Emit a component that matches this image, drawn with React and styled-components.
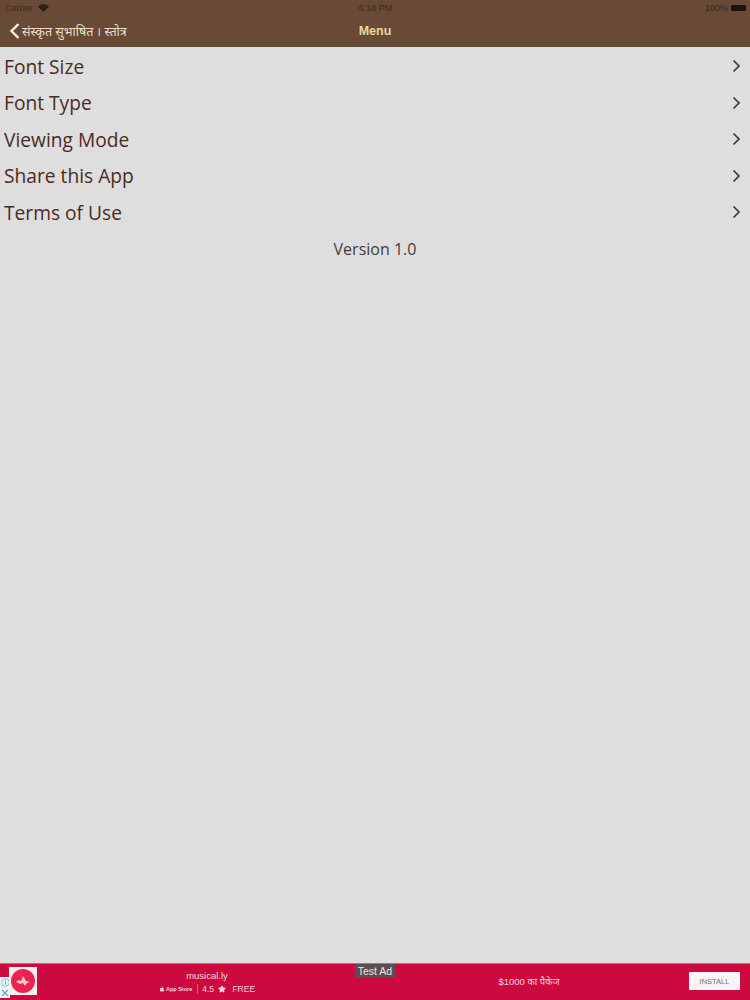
import React from 'react';
import styled, { createGlobalStyle } from 'styled-components';
import { FaApple, FaStar } from 'react-icons/fa';

const primaryFont = '"Open Sans", "Noto Sans", sans-serif';
const helvetica = '"Liberation Sans", Arial, sans-serif';
const brown = '#684a37';
const crimson = '#cd0a3f';

const GlobalStyle = createGlobalStyle`
  html, body, #root {
    margin: 0;
    padding: 0;
    height: 100%;
  }
  body {
    background: #dedede;
    font-family: ${primaryFont};
  }
`;

const Pagina = styled.div`
  width: 750px;
  height: 1000px;
  display: flex;
  flex-direction: column;
  overflow: hidden;
`;

const Cabecera = styled.header`
  height: 47px;
  flex: none;
  box-sizing: border-box;
  background: ${brown};
  border-bottom: 1px solid #5b4a40;
  display: flex;
  flex-direction: column;
`;

const StatusBar = styled.div`
  height: 15px;
  flex: none;
  display: grid;
  grid-template-columns: 1fr auto 1fr;
  align-items: center;
  padding: 0 4px 0 5px;
  font-family: ${helvetica};
  font-size: 9px;
  color: #38281e;
`;

const StatusLeft = styled.div`
  display: flex;
  align-items: center;
  gap: 5px;
`;

const StatusRight = styled.div`
  display: flex;
  align-items: center;
  justify-content: flex-end;
  gap: 3px;
`;

const Battery = styled.span`
  display: block;
  width: 15px;
  height: 6px;
  border-radius: 1px;
  background: #1d1410;
`;

const NavBar = styled.nav`
  flex: 1;
  display: grid;
  grid-template-columns: 1fr auto 1fr;
  align-items: center;
  padding: 1px 9px 0;
`;

const BackLink = styled.div`
  display: flex;
  align-items: center;
  gap: 2px;
  font-family: "Noto Sans", "Lohit Devanagari", sans-serif;
  font-size: 12.5px;
  color: #eadfc9;
  white-space: nowrap;
`;

const NavTitle = styled.h1`
  margin: 0;
  font-family: ${helvetica};
  font-size: 12.5px;
  font-weight: 700;
  color: #e8d89a;
`;

const Contenido = styled.main`
  flex: 1;
  padding-top: 1px;
  background: #dedede;
`;

const Lista = styled.ul`
  list-style: none;
  margin: 0;
  padding: 0;
`;

const Fila = styled.li`
  height: 36.5px;
  display: flex;
  align-items: center;
  justify-content: space-between;
  padding: 0 9px 0 4px;
  font-size: 19.2px;
  color: #4b2a22;
`;

const Version = styled.div`
  height: 36.5px;
  display: flex;
  align-items: center;
  justify-content: center;
  font-size: 16px;
  color: #4a3a34;
`;

const Anuncio = styled.footer`
  position: relative;
  height: 37px;
  flex: none;
  background: ${crimson};
  border-top: 1px solid #e8587c;
  box-sizing: border-box;
  display: grid;
  grid-template-columns: 9px 28px 120px 100px 150px 244px 1fr auto;
  align-items: center;
  padding: 0 10px 2px 0;
  color: #f6d5dd;
  font-family: ${helvetica};
`;

const AdBadges = styled.div`
  display: flex;
  flex-direction: column;
  align-self: end;
  align-items: center;
  justify-content: space-around;
  width: 10px;
  height: 21px;
  background: #eef6f8;
`;

const AppIcon = styled.div`
  width: 28px;
  height: 28px;
  background: #f7eef0;
  display: flex;
  align-items: center;
  justify-content: center;
`;

const AppDisc = styled.div`
  width: 24px;
  height: 24px;
  border-radius: 50%;
  background: #ea2350;
  display: flex;
  align-items: center;
  justify-content: center;
`;

const AppInfo = styled.div`
  grid-column: 4;
  display: flex;
  flex-direction: column;
  align-items: center;
  gap: 3px;
  margin-top: 1px;
  font-size: 9px;
`;

const AppName = styled.div`
  font-size: 9.5px;
  line-height: 11px;
`;

const AppMeta = styled.div`
  display: flex;
  align-items: center;
  gap: 4px;
  font-size: 8.5px;
  line-height: 10px;
  white-space: nowrap;
`;

const StoreLabel = styled.span`
  display: flex;
  align-items: center;
  gap: 1px;
  font-size: 5.5px;
  font-weight: 700;
  padding-right: 5px;
  border-right: 1px solid #dd5b7d;
`;

const Oferta = styled.div`
  grid-column: 6;
  text-align: center;
  font-family: ${helvetica}, "Noto Sans";
  font-size: 9.5px;
`;

const Instalar = styled.button`
  grid-column: 8;
  width: 51px;
  height: 18px;
  padding: 0;
  border: 0;
  border-radius: 1px;
  background: #f9f4f5;
  color: #856b72;
  font-family: ${helvetica};
  font-size: 7.5px;
`;

const TestAd = styled.div`
  position: absolute;
  left: 355px;
  top: 0;
  width: 40px;
  height: 14px;
  background: #5a4f50;
  color: #e6e6e6;
  font-size: 10.5px;
  line-height: 14px;
  text-align: center;
`;

const Wifi = () => (
  <svg width="11" height="8" viewBox="0 0 11 8">
    <path d="M5.5 8 0 2.6C3.2-.8 7.8-.8 11 2.6z" fill="#2d1f17" />
  </svg>
);

const Back = () => (
  <svg width="11" height="18" viewBox="0 0 11 18" fill="none">
    <path d="M9.5 2 2.5 9l7 7" stroke="#f5efe2" strokeWidth="2.4" />
  </svg>
);

const Chevron = () => (
  <svg width="9" height="14" viewBox="0 0 9 14" fill="none">
    <path d="M1.5 1.5 7 7l-5.5 5.5" stroke="#3d3a38" strokeWidth="1.7" />
  </svg>
);

const Onda = () => (
  <svg width="16" height="12" viewBox="0 0 16 12">
    <path d="M1 7 4 5 6 6 8 1l2 3 1 2 4 1-3 1-2 3-2-3-3 1z" fill="#f7c7d2" />
  </svg>
);

const InfoBadge = () => (
  <svg width="9" height="9" viewBox="0 0 9 9" fill="none" stroke="#58b7d3">
    <circle cx="4.5" cy="4.5" r="3.8" strokeWidth=".8" />
    <path d="M4.5 3.6v3M4.5 2v.9" strokeWidth="1" />
  </svg>
);

const CloseBadge = () => (
  <svg width="8" height="8" viewBox="0 0 8 8" fill="none" stroke="#58a9c4">
    <path d="M1 1l6 6M7 1 1 7" strokeWidth="1.1" />
  </svg>
);

const items = ['Font Size', 'Font Type', 'Viewing Mode', 'Share this App', 'Terms of Use'];

const App = () => (
  <Pagina>
    <GlobalStyle />
    <Cabecera>
      <StatusBar>
        <StatusLeft>Carrier <Wifi /></StatusLeft>
        <span>6:18 PM</span>
        <StatusRight>100% <Battery /></StatusRight>
      </StatusBar>
      <NavBar>
        <BackLink><Back />संस्कृत सुभाषित । स्तोत्र</BackLink>
        <NavTitle>Menu</NavTitle>
      </NavBar>
    </Cabecera>
    <Contenido>
      <Lista>
        {items.map((item) => (
          <Fila key={item}>{item}<Chevron /></Fila>
        ))}
      </Lista>
      <Version>Version 1.0</Version>
    </Contenido>
    <Anuncio>
      <AdBadges><InfoBadge /><CloseBadge /></AdBadges>
      <AppIcon><AppDisc><Onda /></AppDisc></AppIcon>
      <AppInfo>
        <AppName>musical.ly</AppName>
        <AppMeta>
          <StoreLabel><FaApple size={6} /> App Store</StoreLabel>
          4.5 <FaStar size={8} /> &nbsp;FREE
        </AppMeta>
      </AppInfo>
      <Oferta>$1000 का पैकेज</Oferta>
      <Instalar>INSTALL</Instalar>
      <TestAd>Test Ad</TestAd>
    </Anuncio>
  </Pagina>
);

export default App;
